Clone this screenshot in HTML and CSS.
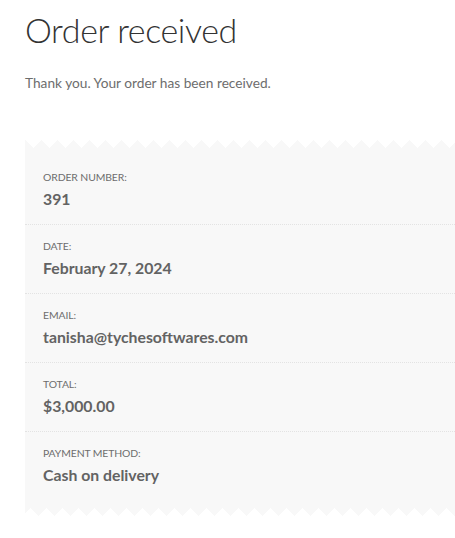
FILE: index.html
```
<!DOCTYPE html>
<html lang="en">
<head>
<meta charset="utf-8">
<title>Order received</title>
<link rel="stylesheet" href="styles.css">
</head>
<body>
<main class="page">
  <h1 class="title">Order received</h1>
  <p class="notice">Thank you. Your order has been received.</p>
  <ul class="order-details">
    <li class="detail">Order number: <strong class="value">391</strong></li>
    <li class="detail">Date: <strong class="value">February 27, 2024</strong></li>
    <li class="detail">Email: <strong class="value">tanisha@tychesoftwares.com</strong></li>
    <li class="detail">Total: <strong class="value">$3,000.00</strong></li>
    <li class="detail">Payment method: <strong class="value">Cash on delivery</strong></li>
  </ul>
</main>
</body>
</html>
```
FILE: styles.css
```
html {
  overflow: hidden;
}
html, body {
  margin: 0;
  padding: 0;
  background: #ffffff;
}
body {
  font-family: Lato, "Liberation Sans", sans-serif;
  color: #6d6d6d;
  font-size: 14px;
}
.page {
  padding: 0 0 40px 25px;
}
.title {
  margin: 0;
  padding-top: 7px;
  font-size: 34px;
  font-weight: 300;
  line-height: 46px;
  color: #333333;
  letter-spacing: -0.4px;
}
.notice {
  margin: 19px 0 0;
  font-size: 13.7px;
  line-height: 22px;
}
.order-details {
  list-style: none;
  margin: 62px 0 0;
  padding: 0;
  background: #f8f8f8;
  position: relative;
}
.order-details::before,
.order-details::after {
  content: "";
  display: block;
  position: absolute;
  left: 0;
  width: 100%;
  height: 16px;
  background:
    linear-gradient(-45deg, #f8f8f8 50%, transparent 50%),
    linear-gradient(45deg, #f8f8f8 50%, transparent 50%);
  background-size: 16px 16px, 16px 16px;
}
.order-details::before {
  top: -16px;
}
.order-details::after {
  bottom: -16px;
  transform: rotate(180deg);
}
.detail {
  padding: 12px 18px 12px 18px;
  font-size: 10.4px;
  line-height: 18px;
  text-transform: uppercase;
  letter-spacing: -0.1px;
  border-bottom: 1px dotted #e3e3e3;
}
.detail:last-child {
  border-bottom: 0;
}
.value {
  display: block;
  font-size: 15.8px;
  line-height: 26px;
  font-weight: 700;
  text-transform: none;
  letter-spacing: 0;
  color: #636363;
}
```
